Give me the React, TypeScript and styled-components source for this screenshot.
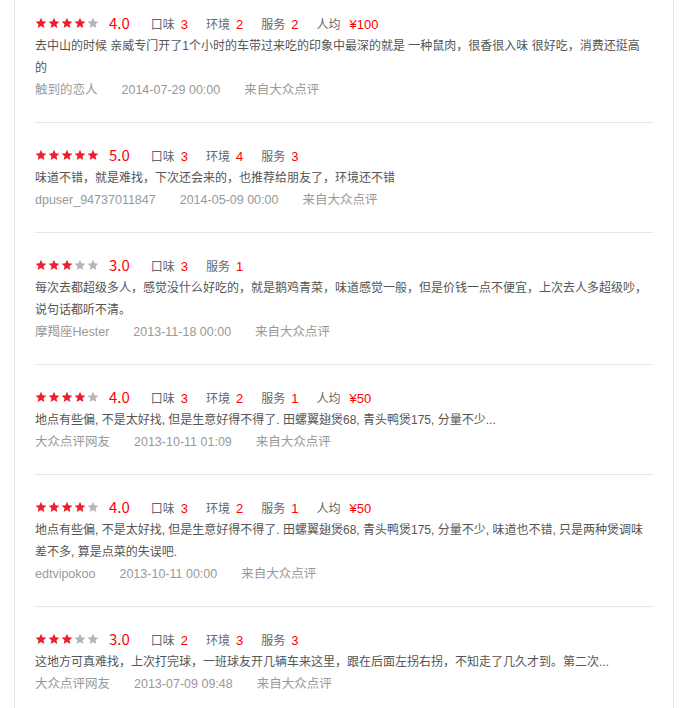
import React from 'react';
import styled, {createGlobalStyle} from 'styled-components';

const GlobalStyle = createGlobalStyle`
  body {
    margin: 0;
    background: #fff;
    font-family: "Liberation Sans", "Noto Sans CJK SC", sans-serif;
  }
`;

type Review = {
  rating: number;
  scores: {label: string; value: string}[];
  text: string;
  user: string;
  date: string;
};

const reviews: Review[] = [
  {
    rating: 4,
    scores: [
      {label: '口味', value: '3'},
      {label: '环境', value: '2'},
      {label: '服务', value: '2'},
      {label: '人均', value: '¥100'},
    ],
    text: '去中山的时候 亲威专门开了1个小时的车带过来吃的印象中最深的就是 一种鼠肉，很香很入味 很好吃，消费还挺高\n的',
    user: '触到的恋人',
    date: '2014-07-29 00:00',
  },
  {
    rating: 5,
    scores: [
      {label: '口味', value: '3'},
      {label: '环境', value: '4'},
      {label: '服务', value: '3'},
    ],
    text: '味道不错，就是难找，下次还会来的，也推荐给朋友了，环境还不错',
    user: 'dpuser_94737011847',
    date: '2014-05-09 00:00',
  },
  {
    rating: 3,
    scores: [
      {label: '口味', value: '3'},
      {label: '服务', value: '1'},
    ],
    text: '每次去都超级多人，感觉没什么好吃的，就是鹅鸡青菜，味道感觉一般，但是价钱一点不便宜，上次去人多超级吵，说句话都听不清。',
    user: '摩羯座Hester',
    date: '2013-11-18 00:00',
  },
  {
    rating: 4,
    scores: [
      {label: '口味', value: '3'},
      {label: '环境', value: '2'},
      {label: '服务', value: '1'},
      {label: '人均', value: '¥50'},
    ],
    text: '地点有些偏, 不是太好找, 但是生意好得不得了. 田螺翼翅煲68, 青头鸭煲175, 分量不少...',
    user: '大众点评网友',
    date: '2013-10-11 01:09',
  },
  {
    rating: 4,
    scores: [
      {label: '口味', value: '3'},
      {label: '环境', value: '2'},
      {label: '服务', value: '1'},
      {label: '人均', value: '¥50'},
    ],
    text: '地点有些偏, 不是太好找, 但是生意好得不得了. 田螺翼翅煲68, 青头鸭煲175, 分量不少, 味道也不错, 只是两种煲调味差不多, 算是点菜的失误吧.',
    user: 'edtvipokoo',
    date: '2013-10-11 00:00',
  },
  {
    rating: 3,
    scores: [
      {label: '口味', value: '2'},
      {label: '环境', value: '3'},
      {label: '服务', value: '3'},
    ],
    text: '这地方可真难找，上次打完球，一班球友开几辆车来这里，跟在后面左拐右拐，不知走了几久才到。第二次...',
    user: '大众点评网友',
    date: '2013-07-09 09:48',
  },
];

const Panel = styled.div`
  box-sizing: border-box;
  width: 660px;
  min-height: 708px;
  margin-left: 14px;
  padding: 0 20px;
  border-left: 1px solid #e5e5e5;
  border-right: 1px solid #e5e5e5;
`;

const Item = styled.div`
  padding: 20px 0 21px;
  border-bottom: 1px solid #e5e5e5;

  &:first-child {
    padding-top: 11px;
  }

  &:last-child {
    border-bottom: none;
  }
`;

const Header = styled.div`
  display: flex;
  align-items: center;
  height: 24px;
`;

const Stars = styled.div`
  display: flex;
  gap: 1px;
`;

const Score = styled.span`
  margin: 0 21px 0 10px;
  font-family: "Noto Sans CJK SC", sans-serif;
  font-size: 15px;
  line-height: 24px;
  color: #f00;
`;

const Metric = styled.span`
  margin-right: 18px;
  font-size: 12px;
  color: #666;
`;

const MetricValue = styled.span<{$wide?: boolean}>`
  margin-left: ${(p) => (p.$wide ? '9px' : '6px')};
  font-size: 13px;
  color: #f00;
`;

const Body = styled.p`
  margin: 0;
  font-size: 12px;
  line-height: 22px;
  color: #555;
  white-space: pre-line;
`;

const Meta = styled.div`
  display: flex;
  gap: 24px;
  font-size: 12.5px;
  line-height: 22px;
  color: #999;
`;

const Star = ({on}: {on: boolean}) => (
  <svg width="12" height="12" viewBox="0 0 24 24">
    <path
      d="M12 1.5l3.1 7.1 7.7.7-5.8 5.1 1.7 7.6L12 18l-6.7 4 1.7-7.6L1.2 9.3l7.7-.7z"
      fill={on ? '#f01e2d' : '#b5b5b5'}
    />
  </svg>
);

export default function App() {
  return (
    <>
      <GlobalStyle/>
      <Panel>
        {reviews.map((r, i) => (
          <Item key={i}>
            <Header>
              <Stars>
                {[0, 1, 2, 3, 4].map((s) => <Star key={s} on={s < r.rating}/>)}
              </Stars>
              <Score>{r.rating.toFixed(1)}</Score>
              {r.scores.map((s) => (
                <Metric key={s.label}>
                  {s.label}
                  <MetricValue $wide={s.label === '人均'}>{s.value}</MetricValue>
                </Metric>
              ))}
            </Header>
            <Body>{r.text}</Body>
            <Meta>
              <span>{r.user}</span>
              <span>{r.date}</span>
              <span>来自大众点评</span>
            </Meta>
          </Item>
        ))}
      </Panel>
    </>
  );
}
